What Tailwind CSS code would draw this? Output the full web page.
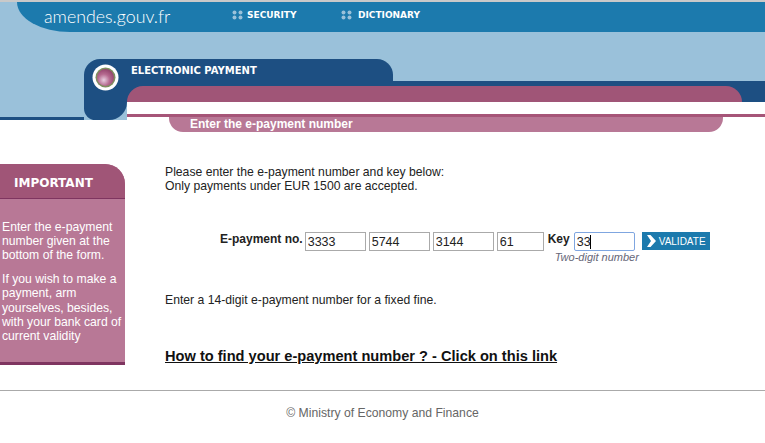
<!DOCTYPE html>
<html lang="en">

<head>
    <meta charset="UTF-8">
    <meta name="viewport" content="width=device-width, initial-scale=1.0">
    <title>amendes.gouv.fr - Electronic payment</title>
    <script src="https://cdn.jsdelivr.net/npm/@tailwindcss/browser@4"></script>
</head>

<body class="bg-white h-[443px] w-[765px] overflow-hidden font-['Liberation_Sans',Arial,sans-serif] text-[12.2px] text-[#222]">

    <!-- Header -->
    <header class="bg-[#9ac1da] h-[120px] flex flex-col">
        <div class="h-[2px] bg-[#c9c9c9]"></div>

        <div class="ml-[17px] h-[30px] bg-[#1c7aad] rounded-bl-[53px_30px] flex items-start text-white">
            <span class="flex-none ml-[27px] mt-[2px] w-[188px] text-[17.8px] leading-[24px] font-['Lato',sans-serif] font-light">amendes.gouv.fr</span>
            <a href="#" class="flex-none flex items-center gap-[4px] mt-[8px] w-[109px] font-['DejaVu_Sans',sans-serif] font-bold text-[9px] leading-[10px]">
                <svg width="11" height="10" viewBox="0 0 11 10" fill="#9ac1da"><circle cx="2.5" cy="2.5" r="2"/><circle cx="8.500" cy="2.5" r="2"/><circle cx="2.5" cy="7.5" r="2"/><circle cx="8.500" cy="7.5" r="2"/></svg>
                SECURITY
            </a>
            <a href="#" class="flex-none flex items-center gap-[6px] mt-[8px] font-['DejaVu_Sans',sans-serif] font-bold text-[9px] leading-[10px]">
                <svg width="11" height="10" viewBox="0 0 11 10" fill="#9ac1da"><circle cx="2.5" cy="2.5" r="2"/><circle cx="8.500" cy="2.5" r="2"/><circle cx="2.5" cy="7.5" r="2"/><circle cx="8.500" cy="7.5" r="2"/></svg>
                DICTIONARY
            </a>
        </div>

        <div class="relative z-10 mt-[27px] ml-[84px] w-[309px] h-[22px] bg-[#1d4f82] rounded-t-[16px] flex items-start text-white">
            <svg class="flex-none ml-[8px] mt-[5px]" width="27" height="27" viewBox="0 0 27 27">
                <defs>
                    <radialGradient id="ball" cx="0.4" cy="0.65" r="0.7">
                        <stop offset="0" stop-color="#e8cfe0"/>
                        <stop offset="0.5" stop-color="#b5698f"/>
                        <stop offset="1" stop-color="#8e3f68"/>
                    </radialGradient>
                </defs>
                <circle cx="13.5" cy="13.5" r="13" fill="#fff"/>
                <circle cx="13.5" cy="13.5" r="10" fill="#7f8f5f"/>
                <circle cx="13.5" cy="13.5" r="8.5" fill="url(#ball)"/>
            </svg>
            <span class="ml-[12px] mt-[7px] font-['DejaVu_Sans',sans-serif] font-bold text-[10px] leading-[10px]">ELECTRONIC PAYMENT</span>
        </div>

        <div class="ml-[84px] h-[21px] bg-[#1d4f82] pt-[5px] pl-[43px]">
            <div class="w-[615px] h-[16px] bg-[#a05577] rounded-t-[16px]"></div>
        </div>

        <div class="flex h-[18px]">
            <div class="flex-none w-[84px] h-[18px] flex flex-col justify-end">
                <div class="h-[3px] bg-[#1d4f82]"></div>
            </div>
            <div class="flex-none w-[43px] h-[18px] bg-[#1d4f82] rounded-bl-[14px] rounded-br-[22px]"></div>
            <div class="flex-1 bg-white">
                <div class="mt-[12px] h-[3px] bg-[#a65578]"></div>
                <div class="ml-[42px] w-[554px] h-[15px] bg-[#b87896] rounded-b-[14px] pl-[21px] text-white font-bold text-[12px] leading-[15px]">Enter the e-payment number</div>
            </div>
        </div>
    </header>

    <!-- Content -->
    <main class="flex h-[270px] mt-[12px]">
        <aside class="flex-none w-[125px] mt-[32px] h-[201px] bg-[#b87896] border-b-[3px] border-[#7f3560] rounded-tr-[20px] text-white">
            <h2 class="h-[35px] bg-[#a05577] border-b border-[#7f3560] rounded-tr-[20px] pl-[14px] pt-[12px] font-['DejaVu_Sans',sans-serif] font-bold text-[12px] leading-[14px]">IMPORTANT</h2>
            <p class="mt-[21px] pl-[2px] leading-[14px]">Enter the e-payment number given at the bottom of the form.</p>
            <p class="mt-[10px] pl-[2px] leading-[14.3px]">If you wish to make a payment, arm yourselves, besides, with your bank card of current validity</p>
        </aside>

        <section class="flex-1 pl-[40px] pt-[32px]">
            <p class="leading-[14px] mt-[1px]">Please enter the e-payment number and key below:<br>Only payments under EUR 1500 are accepted.</p>

            <form class="mt-[39px] ml-[55px] flex items-start">
                <label class="font-bold text-[12px] leading-[14px]">E-payment no.</label>
                <input type="text" value="3333" class="ml-[2px] w-[61px] h-[19px] px-[2px] border border-[#aaa] text-[12.5px] outline-none">
                <input type="text" value="5744" class="ml-[3px] w-[61px] h-[19px] px-[2px] border border-[#aaa] text-[12.5px] outline-none">
                <input type="text" value="3144" class="ml-[3px] w-[61px] h-[19px] px-[2px] border border-[#aaa] text-[12.5px] outline-none">
                <input type="text" value="61" class="ml-[3px] w-[47px] h-[19px] px-[2px] border border-[#aaa] text-[12.5px] outline-none">
                <label class="ml-[4px] font-bold text-[12px] leading-[14px]">Key</label>
                <div class="ml-[4px] w-[61px]">
                    <div class="relative">
                        <input type="text" value="33" class="w-[61px] h-[19px] px-[2px] border border-[#7fa6e0] rounded-[2px] text-[12.5px] outline-none">
                        <span class="absolute left-[16px] top-[3px] w-[1px] h-[14px] bg-black"></span>
                    </div>
                    <span class="block -ml-[19px] whitespace-nowrap italic text-[11px] leading-[12px] text-[#667]">Two-digit number</span>
                </div>
                <button type="button" class="ml-[7px] w-[68px] h-[18px] bg-[#1c7aad] text-white text-[10px] flex items-center">
                    <svg class="ml-[5px] mr-[3px]" width="9" height="12" viewBox="0 0 9 12" fill="#fff"><path d="M0 0h3.5L9 6l-5.500 6H0l4-6z"/></svg>
                    VALIDATE
                </button>
            </form>

            <p class="mt-[30px] leading-[14px]">Enter a 14-digit e-payment number for a fixed fine.</p>

            <a href="#" class="block mt-[41px] font-bold text-[14.62px] leading-[16px] underline text-[#111]">How to find your e-payment number ? - Click on this link</a>
        </section>
    </main>

    <!-- Footer -->
    <footer class="mt-[-12px] border-t border-[#aaa] pt-[15px] text-center text-[#666] leading-[14px]">© Ministry of Economy and Finance</footer>

</body>

</html>
